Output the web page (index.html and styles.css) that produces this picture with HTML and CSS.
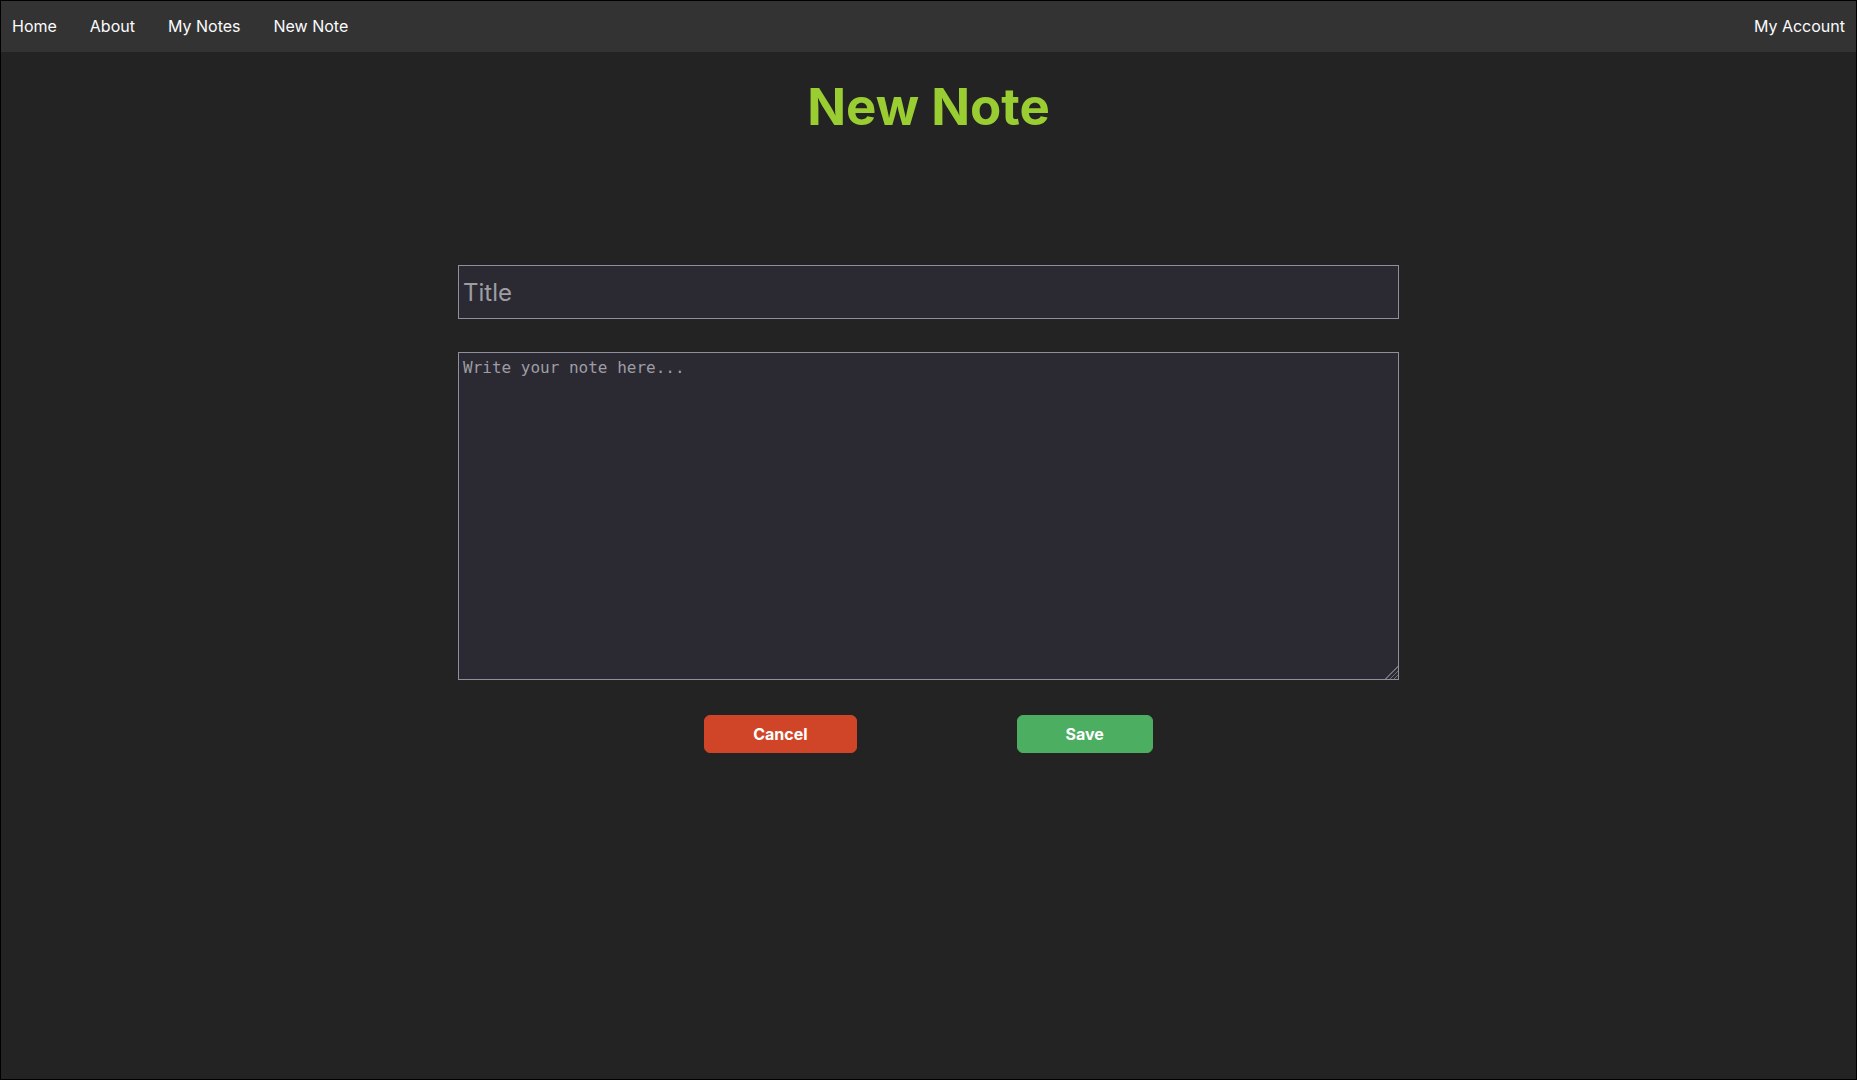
FILE: index.html
```html
<!DOCTYPE html>
<html lang="en">
<head>
<meta charset="utf-8">
<title>New Note</title>
<link rel="stylesheet" href="styles.css">
</head>
<body>
<div class="frame">
  <nav class="topnav">
    <div class="nav-left">
      <a class="nav-link" href="#">Home</a>
      <a class="nav-link" href="#">About</a>
      <a class="nav-link" href="#">My Notes</a>
      <a class="nav-link" href="#">New Note</a>
    </div>
    <a class="nav-link" href="#">My Account</a>
  </nav>
  <main class="content">
    <h1 class="page-title">New Note</h1>
    <form class="note-form">
      <input class="title-input" type="text" placeholder="Title">
      <textarea class="body-input" placeholder="Write your note here..."></textarea>
      <div class="actions">
        <button type="button" class="btn btn-cancel">Cancel</button>
        <button type="button" class="btn btn-save">Save</button>
      </div>
    </form>
  </main>
</div>
</body>
</html>
```

FILE: styles.css
```css
* { box-sizing: border-box; }

html, body {
  margin: 0;
  padding: 0;
  background: #232323;
}

body {
  font-family: Inter, "Noto Sans", "Liberation Sans", sans-serif;
  color: #fbfbfe;
}

.frame {
  height: 100vh;
  border: 1px solid #000;
  background: #232323;
  display: flex;
  flex-direction: column;
}

.topnav {
  height: 51px;
  background: #333333;
  display: flex;
  align-items: center;
  justify-content: space-between;
  padding: 0 11px 2px 11px;
  flex-shrink: 0;
}

.nav-left {
  display: flex;
  gap: 33px;
}

.nav-link {
  color: #fbfbfe;
  text-decoration: none;
  font-size: 16px;
  line-height: 20px;
}

.content {
  display: flex;
  flex-direction: column;
  align-items: center;
}

.page-title {
  margin: 24px 0 0;
  font-size: 51px;
  line-height: 62px;
  font-weight: 700;
  color: #9acd32;
}

.note-form {
  width: 941px;
  margin-top: 127px;
  display: flex;
  flex-direction: column;
}

.title-input {
  height: 54px;
  width: 100%;
  padding: 0 4px;
  background: #2b2a33;
  border: 1px solid #8f8f9d;
  border-radius: 0;
  color: #fbfbfe;
  font-family: Inter, "Noto Sans", sans-serif;
  font-size: 24px;
  outline: none;
}

.title-input::placeholder {
  color: #9d9da3;
}

.body-input {
  margin-top: 33px;
  height: 328px;
  width: 100%;
  padding: 5px 4px 4px;
  background: #2b2a33;
  border: 1px solid #8f8f9d;
  border-radius: 0;
  color: #fbfbfe;
  font-family: "DejaVu Sans Mono", monospace;
  font-size: 16px;
  line-height: 19px;
  resize: both;
  outline: none;
}

.body-input::placeholder {
  color: #9d9da3;
}

.body-input::-webkit-resizer {
  background:
    linear-gradient(135deg, #2b2a33 55%, transparent 55%),
    repeating-linear-gradient(135deg, #6f6f7a 0 1px, #2b2a33 1px 3px);
}

.actions {
  margin-top: 35px;
  display: flex;
  justify-content: center;
  gap: 160px;
}

.btn {
  height: 38px;
  padding: 0 48px;
  border: 1px solid transparent;
  border-radius: 6px;
  color: #ffffff;
  font-family: Inter, "Noto Sans", sans-serif;
  font-size: 16px;
  font-weight: 700;
  cursor: pointer;
}

.btn-cancel {
  background: #d04528;
  border-color: #d04528;
}

.btn-save {
  background: #4bae61;
  border-color: #4bae61;
}
```
